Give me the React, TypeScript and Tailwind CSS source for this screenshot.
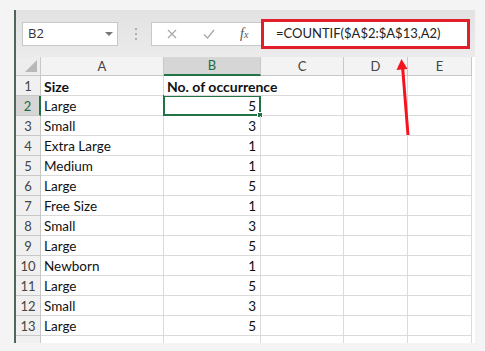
import React from "react";

const data: [string, string][] = [
  ["Size", "No. of occurrence"],
  ["Large", "5"],
  ["Small", "3"],
  ["Extra Large", "1"],
  ["Medium", "1"],
  ["Large", "5"],
  ["Free Size", "1"],
  ["Small", "3"],
  ["Large", "5"],
  ["Newborn", "1"],
  ["Large", "5"],
  ["Small", "3"],
  ["Large", "5"],
];

const font = { fontFamily: "Lato, 'Noto Sans', sans-serif" };

export default function App() {
  return (
    <div className="relative h-[351px] w-[485px] overflow-hidden bg-[#f4f4f4] pl-[14px] pt-[10px]" style={font}>
      <div className="flex h-[333px] w-[461px] flex-col border-l-2 border-[#4f6658] bg-white">
        <Toolbar />
        <Sheet />
      </div>
      <Arrow />
    </div>
  );
}

function Toolbar() {
  return (
    <div className="flex h-[47px] items-center bg-gradient-to-b from-[#e2e2e2] to-[#ebebeb] pl-[6px]">
      <div className="flex h-[24px] w-[96px] items-center justify-between border border-[#c8c8c8] bg-white pl-[5px] pr-[4px]">
        <span className="text-[#333]" style={{ fontFamily: "'Open Sans', sans-serif", fontSize: 13 }}>
          B2
        </span>
        <span className="h-0 w-0 border-x-[4px] border-t-[4px] border-x-transparent border-t-[#777]" />
      </div>
      <div className="ml-[17px] mr-[14px] flex flex-col gap-[3px]">
        <span className="h-[2px] w-[2px] bg-[#b0b0b0]" />
        <span className="h-[2px] w-[2px] bg-[#b0b0b0]" />
        <span className="h-[2px] w-[2px] bg-[#b0b0b0]" />
      </div>
      <div className="flex h-[24px] w-[110px] items-center border-y border-l border-[#c8c8c8] bg-white">
        <svg width="10" height="10" viewBox="0 0 10 10" className="ml-[15px]">
          <path d="M1 1L9 9M9 1L1 9" stroke="#a8a8a8" strokeWidth="1.3" />
        </svg>
        <svg width="12" height="10" viewBox="0 0 12 10" className="ml-[26px]">
          <path d="M1 5.5L4.5 9L11 1" stroke="#a8a8a8" strokeWidth="1.3" fill="none" />
        </svg>
        <span className="ml-[25px] text-[14px] italic text-[#555]" style={{ fontFamily: "'Liberation Serif', serif" }}>
          f<span className="text-[10px]">x</span>
        </span>
      </div>
      <div className="flex h-[30px] w-[209px] items-center border-[3px] border-[#e11f2b] bg-white pl-[12px]">
        <span className="text-[13px] text-[#222]">=COUNTIF($A$2:$A$13,A2)</span>
      </div>
    </div>
  );
}

function Sheet() {
  const cols = ["A", "B", "C", "D", "E"];
  return (
    <div className="grid flex-1 grid-cols-[25px_123px_97px_83px_64px_64px] content-start text-[13.5px] text-[#111]">
      <div className="relative h-[19px] border-b border-r border-[#c8c8c8] bg-[#ededed]">
        <span className="absolute bottom-[3px] right-[3px] h-0 w-0 border-b-[12px] border-l-[12px] border-b-[#b8b8b8] border-l-transparent" />
      </div>
      {cols.map((c) => (
        <div
          key={c}
          className={
            c === "B"
              ? "flex h-[19px] items-center justify-center border-b-2 border-r border-b-[#217346] border-r-[#c8c8c8] bg-[#d6d6d6] pt-px text-[13px] text-[#1e6b41]"
              : "flex h-[19px] items-center justify-center border-b border-r border-[#c8c8c8] bg-[#f3f3f3] pt-px text-[13px] text-[#444]"
          }
        >
          {c}
        </div>
      ))}
      {data.map(([a, b], i) => (
        <React.Fragment key={i}>
          <div
            className={
              i === 1
                ? "flex h-[20px] items-center justify-center border-b border-r-2 border-b-[#c8c8c8] border-r-[#217346] bg-[#d6d6d6] pt-[2px] text-[13px] text-[#1e6b41]"
                : "flex h-[20px] items-center justify-center border-b border-r border-[#c8c8c8] bg-[#f0f0f0] pt-[2px] text-[13px] text-[#444]"
            }
          >
            {i + 1}
          </div>
          <div className="flex h-[20px] items-center border-b border-r border-[#dadada] pl-[3px] pt-[2px]">
            <span className={i === 0 ? "text-[14px] font-bold" : ""}>{a}</span>
          </div>
          {i === 0 ? (
            <div className="relative z-10 flex h-[20px] items-center whitespace-nowrap border-b border-[#dadada] pl-[3px] pt-[2px] text-[14px] font-bold">
              {b}
            </div>
          ) : (
            <div className="relative flex h-[20px] items-center justify-end border-b border-r border-[#dadada] pr-[4px] pt-[2px]">
              {b}
              {i === 1 && (
                <div className="absolute -left-px -top-px bottom-[-1px] right-[-1px] border-2 border-[#217346]">
                  <span className="absolute -bottom-[4px] -right-[4px] h-[6px] w-[6px] border border-white bg-[#217346]" />
                </div>
              )}
            </div>
          )}
          <div className="h-[20px] border-b border-r border-[#dadada]" />
          <div className="h-[20px] border-b border-r border-[#dadada]" />
          <div className="h-[20px] border-b border-r border-[#dadada]" />
        </React.Fragment>
      ))}
      <div className="h-[7px] border-r border-[#c8c8c8] bg-[#f0f0f0]" />
      <div className="h-[7px] border-r border-[#dadada]" />
      <div className="h-[7px] border-r border-[#dadada]" />
      <div className="h-[7px] border-r border-[#dadada]" />
      <div className="h-[7px] border-r border-[#dadada]" />
      <div className="h-[7px] border-r border-[#dadada]" />
    </div>
  );
}

function Arrow() {
  return (
    <svg className="pointer-events-none absolute left-0 top-0" width="485" height="351" viewBox="0 0 485 351">
      <line x1="402.5" y1="66" x2="408" y2="135" stroke="#f5141e" strokeWidth="3" />
      <path d="M401.5 59L396.5 70L407.5 69Z" fill="#f5141e" />
    </svg>
  );
}
